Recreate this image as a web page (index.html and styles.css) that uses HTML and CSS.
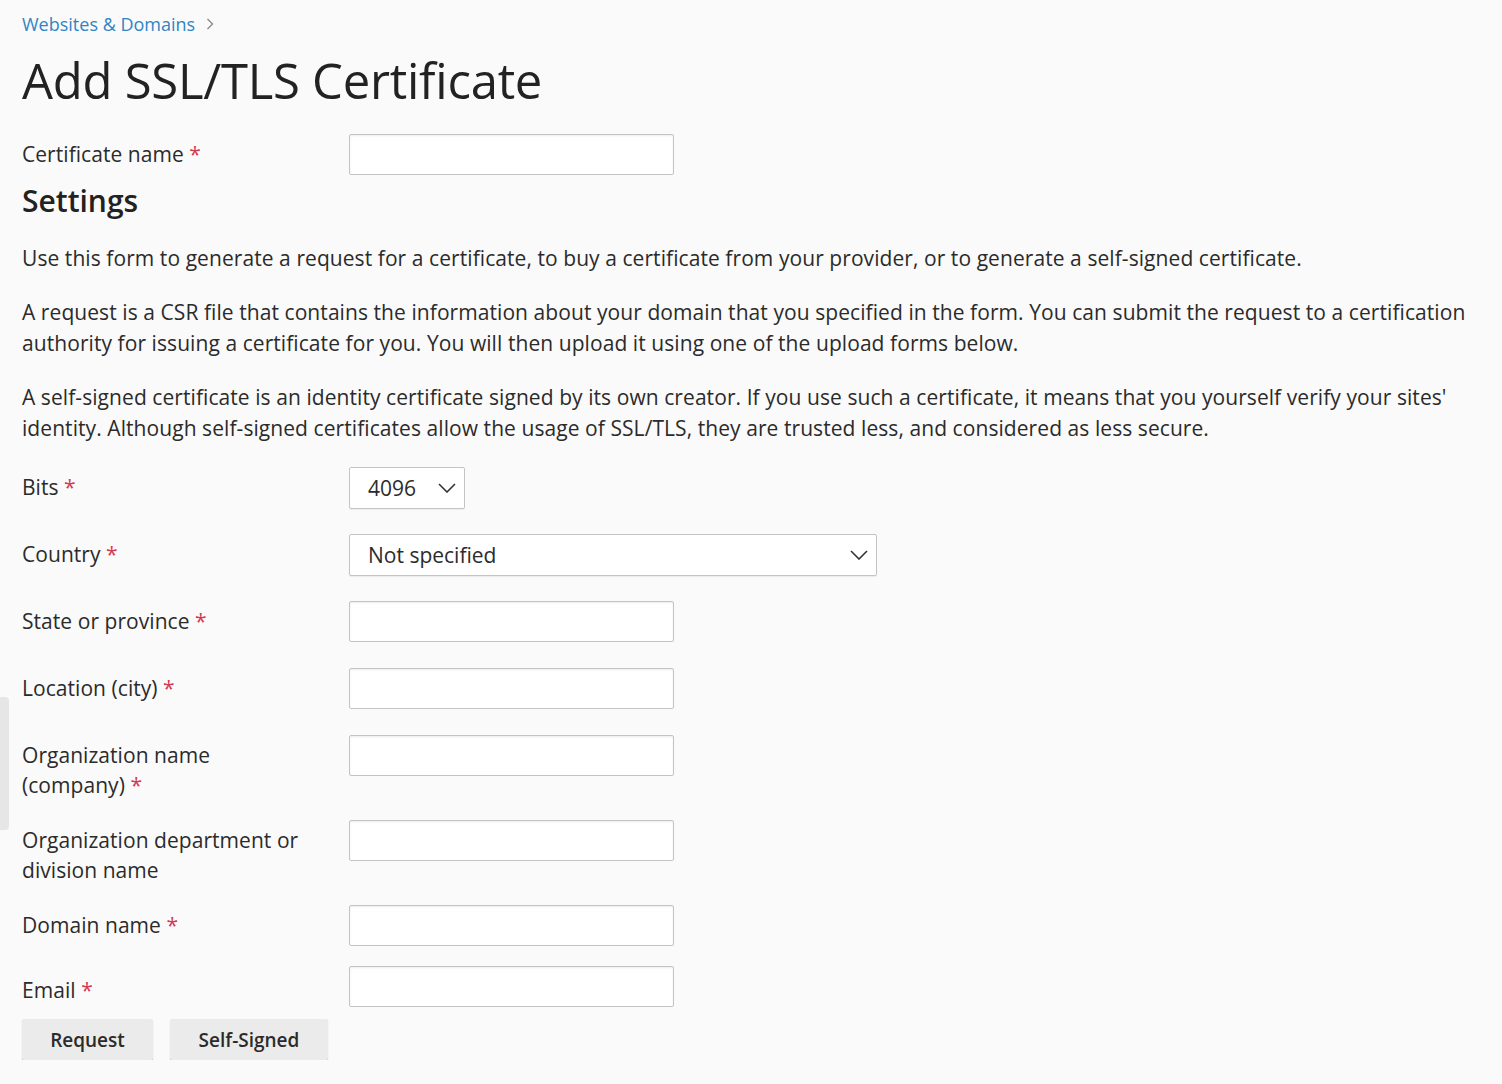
FILE: index.html
```html
<!DOCTYPE html>
<html lang="en">
<head>
<meta charset="utf-8">
<title>Add SSL/TLS Certificate</title>
<link rel="stylesheet" href="styles.css">
</head>
<body>
<div class="side-handle"></div>
<main class="page">
  <nav class="breadcrumb"><a href="#">Websites &amp; Domains</a><svg class="crumb-sep" width="10" height="14" viewBox="0 0 10 14"><path d="M2.5 2 L7.5 7 L2.5 12" fill="none" stroke="#8c8c8c" stroke-width="1.4"/></svg></nav>
  <h1 class="title">Add SSL/TLS Certificate</h1>

  <div class="row row-first">
    <label class="label">Certificate name <span class="req">*</span></label>
    <div class="field"><input class="input" type="text"></div>
  </div>

  <h2 class="section">Settings</h2>
  <p class="text">Use this form to generate a request for a certificate, to buy a certificate from your provider, or to generate a self-signed certificate.</p>
  <p class="text">A request is a CSR file that contains the information about your domain that you specified in the form. You can submit the request to a certification authority for issuing a certificate for you. You will then upload it using one of the upload forms below.</p>
  <p class="text">A self-signed certificate is an identity certificate signed by its own creator. If you use such a certificate, it means that you yourself verify your sites' identity. Although self-signed certificates allow the usage of SSL/TLS, they are trusted less, and considered as less secure.</p>

  <div class="form">
    <div class="row row-select">
      <label class="label">Bits <span class="req">*</span></label>
      <div class="field"><div class="select select-bits"><span>4096</span><svg class="chev" width="18" height="10" viewBox="0 0 18 10"><path d="M1 1 L9 9 L17 1" fill="none" stroke="#333" stroke-width="1.6"/></svg></div></div>
    </div>
    <div class="row row-select">
      <label class="label">Country <span class="req">*</span></label>
      <div class="field"><div class="select select-country"><span>Not specified</span><svg class="chev" width="18" height="10" viewBox="0 0 18 10"><path d="M1 1 L9 9 L17 1" fill="none" stroke="#333" stroke-width="1.6"/></svg></div></div>
    </div>
    <div class="row">
      <label class="label">State or province <span class="req">*</span></label>
      <div class="field"><input class="input" type="text"></div>
    </div>
    <div class="row">
      <label class="label">Location (city) <span class="req">*</span></label>
      <div class="field"><input class="input" type="text"></div>
    </div>
    <div class="row">
      <label class="label">Organization name (company)&nbsp;<span class="req">*</span></label>
      <div class="field"><input class="input" type="text"></div>
    </div>
    <div class="row">
      <label class="label">Organization department or division name</label>
      <div class="field"><input class="input" type="text"></div>
    </div>
    <div class="row row-domain">
      <label class="label">Domain name <span class="req">*</span></label>
      <div class="field"><input class="input" type="text"></div>
    </div>
    <div class="row row-email">
      <label class="label label-email">Email <span class="req">*</span></label>
      <div class="field"><input class="input" type="text"></div>
    </div>
  </div>

  <div class="buttons">
    <button class="btn btn-request" type="button">Request</button>
    <button class="btn btn-self" type="button">Self-Signed</button>
  </div>
</main>
</body>
</html>
```

FILE: styles.css
```css
html, body {
  margin: 0;
  padding: 0;
  background: #fafafa;
}
body {
  font-family: "Open Sans", "Noto Sans", sans-serif;
  color: #2b2b2b;
}
.side-handle {
  position: absolute;
  left: 0;
  top: 697px;
  width: 9px;
  height: 133px;
  background: #e6e6e6;
  border-radius: 0 4px 4px 0;
}
.page {
  padding: 12px 22px 0 22px;
}
.breadcrumb {
  display: flex;
  align-items: center;
  gap: 10px;
  height: 24px;
  font-size: 18px;
  line-height: 24px;
}
.breadcrumb a {
  color: #2f85c3;
  text-decoration: none;
}
.crumb-sep { display: block; }
.title {
  margin: 14px 0 0 0;
  font-size: 49px;
  font-weight: 400;
  line-height: 60px;
  color: #222;
  letter-spacing: -0.25px;
}
.row {
  display: grid;
  grid-template-columns: 327px 1fr;
  align-items: start;
}
.row-first {
  margin-top: 24px;
}
.label {
  display: block;
  font-size: 21px;
  line-height: 30px;
  padding-top: 5px;
  padding-right: 40px;
  color: #2b2b2b;
  letter-spacing: 0.05px;
}
.req {
  color: #d33a52;
}
.field {
  padding-bottom: 6px;
}
.row-select .field {
  padding-bottom: 5px;
}
.input {
  display: block;
  box-sizing: border-box;
  width: 325px;
  height: 41px;
  margin: 0;
  border: 1px solid #c4c4c4;
  border-radius: 2px;
  background: #fff;
  box-shadow: inset 0 1px 2px rgba(0,0,0,0.08);
  font: inherit;
}
.section {
  margin: 0;
  font-size: 30px;
  line-height: 40px;
  font-weight: 600;
  color: #222;
}
.text {
  margin: 22px 0 0 0;
  font-size: 21px;
  line-height: 31px;
  color: #2b2b2b;
  letter-spacing: 0.07px;
}
.text + .text {
  margin-top: 23px;
}
.form {
  margin-top: 23px;
  display: flex;
  flex-direction: column;
  gap: 20px;
}
.select {
  box-sizing: border-box;
  height: 42px;
  display: flex;
  align-items: center;
  justify-content: space-between;
  padding: 0 8px 0 18px;
  border: 1px solid #c4c4c4;
  border-radius: 2px;
  background: #fff;
  box-shadow: 0 1px 1px rgba(0,0,0,0.06);
  font-size: 21px;
  color: #2b2b2b;
}
.select-bits { width: 116px; }
.select-country { width: 528px; }
.chev { display: block; }
.row-domain + .row-email {
  margin-top: -6px;
}
.row-email .field { padding-bottom: 0; }
.label-email { padding-top: 9px; }
.buttons {
  display: flex;
  gap: 17px;
  margin-top: 12px;
}
.btn {
  height: 41px;
  padding: 0;
  border: none;
  border-radius: 2px;
  background: #ebebeb;
  box-shadow: 0 1px 1px rgba(0,0,0,0.25);
  font-family: "Open Sans", "Noto Sans", sans-serif;
  font-size: 19px;
  font-weight: 600;
  color: #2b2b2b;
}
.btn-request { width: 131px; }
.btn-self { width: 158px; }
```
